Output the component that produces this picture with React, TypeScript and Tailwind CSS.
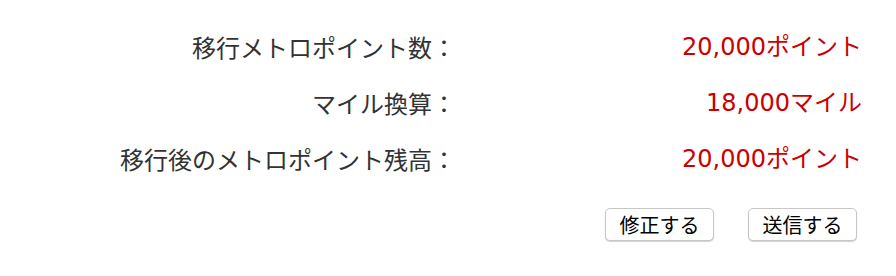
import React from 'react';

interface Row {
  label: string;
  value: string;
}

const rows: Row[] = [
  { label: '移行メトロポイント数：', value: '20,000ポイント' },
  { label: 'マイル換算：', value: '18,000マイル' },
  { label: '移行後のメトロポイント残高：', value: '20,000ポイント' },
];

const font = { fontFamily: '"Noto Sans CJK JP", "Noto Sans", sans-serif' };
const valueFont = { fontFamily: '"DejaVu Sans", "Noto Sans CJK JP", sans-serif' };

export default function App() {
  return (
    <div className="w-[896px] h-[276px] bg-white pt-[19px] pr-[34px]" style={font}>
      {rows.map((row) => (
        <div key={row.label} className="flex items-center h-[56px]">
          <div className="w-[456px] text-right text-[24px] leading-none text-[#333333]">
            {row.label}
          </div>
          <div className="flex-1 text-right text-[24px] leading-none text-[#cc0000]" style={valueFont}>
            {row.value}
          </div>
        </div>
      ))}

      <div className="flex justify-end gap-[34px] mt-[21px] mr-[5px]">
        <button className="w-[109px] h-[33px] bg-white border border-[#c6c6c6] rounded-[5px] shadow-[0_1px_1px_rgba(0,0,0,0.18)] text-[20px] leading-none text-black">
          修正する
        </button>
        <button className="w-[109px] h-[33px] bg-white border border-[#c6c6c6] rounded-[5px] shadow-[0_1px_1px_rgba(0,0,0,0.18)] text-[20px] leading-none text-black">
          送信する
        </button>
      </div>
    </div>
  );
}
